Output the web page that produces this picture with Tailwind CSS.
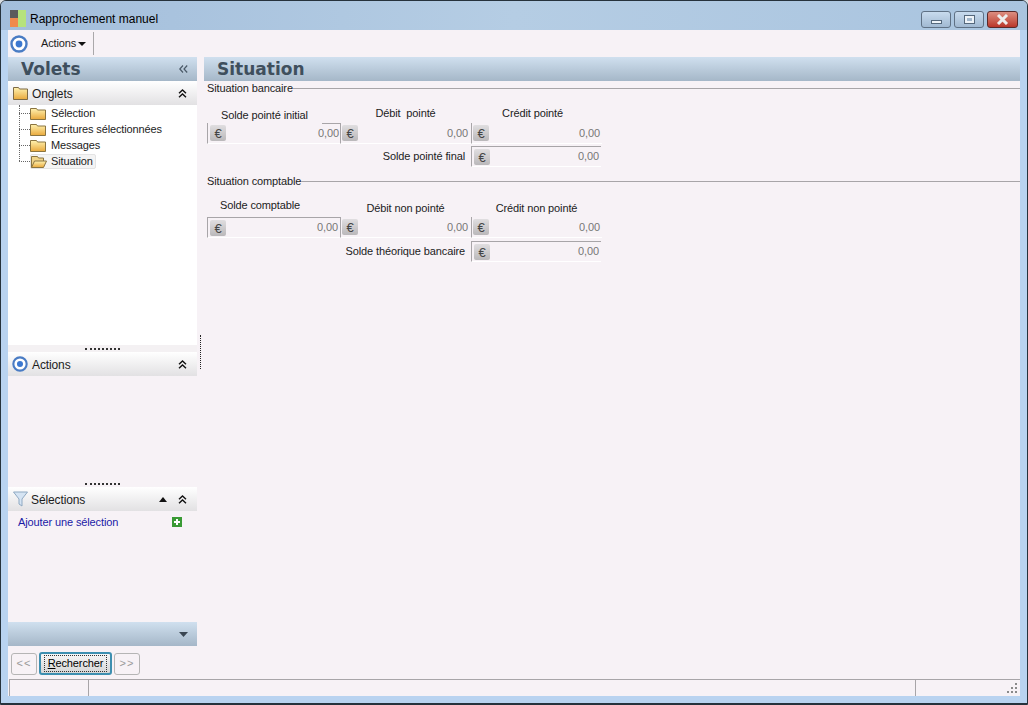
<!DOCTYPE html>
<html lang="fr">
<head>
  <meta charset="UTF-8">
  <title>Rapprochement manuel</title>
  <script src="https://cdn.jsdelivr.net/npm/@tailwindcss/browser@4"></script>
</head>
<body class="w-[1028px] h-[705px] overflow-hidden bg-[#d8dde2] font-['Liberation_Sans',sans-serif] text-[11px] tracking-[-0.12px] text-[#1c1c1c]">
  <svg class="absolute w-0 h-0">
    <defs>
      <linearGradient id="folder" x1="0" y1="0" x2="0" y2="1"><stop offset="0" stop-color="#fff2b0"/><stop offset="1" stop-color="#e9a93c"/></linearGradient>
      <linearGradient id="euro" x1="0" y1="0" x2="0" y2="1"><stop offset="0" stop-color="#e0dee0"/><stop offset="1" stop-color="#bab8ba"/></linearGradient>
    </defs>
  </svg>
  <div class="relative flex flex-col w-[1028px] h-[705px] rounded-t-[6px] border border-[#26323c] bg-[#b9d3f0]">
    <!-- Title bar -->
    <div class="flex items-center h-[29px] shrink-0 pl-[9px] pr-[9px] rounded-t-[5px] bg-gradient-to-r from-[#a3bedb] via-[#b5cde4] to-[#a9c4df]">
      <div class="grid grid-cols-2 grid-rows-2 w-[16px] h-[17px] mt-[5px]">
        <div class="bg-[#5c5c5c]"></div>
        <div class="row-span-2 bg-[#b6e27c]"></div>
        <div class="bg-[#f08a4c]"></div>
      </div>
      <span class="ml-[4px] mt-[6px] text-[12px] text-black tracking-normal">Rapprochement manuel</span>
      <div class="ml-auto flex gap-[3px] mt-[8px]">
        <div class="flex items-center justify-center w-[30px] h-[17px] rounded-[3px] border border-[#5f7185] bg-gradient-to-b from-[#c8dbee] to-[#a1b9d2]">
          <div class="w-[11px] h-[4px] mt-[4px] bg-[#eef3f8] border border-[#55687c]"></div>
        </div>
        <div class="flex items-center justify-center w-[30px] h-[17px] rounded-[3px] border border-[#5f7185] bg-gradient-to-b from-[#c8dbee] to-[#a1b9d2]">
          <div class="w-[9px] h-[7px] bg-[#55687c]/20 border-2 border-[#eef3f8] outline outline-1 outline-[#55687c]"></div>
        </div>
        <div class="flex items-center justify-center w-[31px] h-[17px] rounded-[3px] border border-[#5a2a2a] bg-gradient-to-b from-[#dc8d80] to-[#b9352a]">
          <svg width="13" height="11" viewBox="0 0 13 11"><path d="M2 1l9 9M11 1l-9 9" stroke="#eee" stroke-width="3"/></svg>
        </div>
      </div>
    </div>

    <!-- Window content -->
    <div class="flex flex-col mx-[7px] w-[1012px] h-[666px] bg-[#f7f2f6]">
      <!-- Toolbar -->
      <div class="flex items-center h-[27px] shrink-0 pl-[2px]">
        <svg width="18" height="18" viewBox="0 0 18 18"><circle cx="9" cy="9" r="7.5" fill="#fff" stroke="#4a7cc4" stroke-width="2.4"/><circle cx="9" cy="9" r="3.4" fill="#3c78d0"/></svg>
        <span class="ml-[13px]">Actions</span>
        <svg class="ml-[2px] mt-[1px]" width="8" height="4" viewBox="0 0 8 4"><path d="M0 0h8L4 4z" fill="#111"/></svg>
        <div class="ml-[7px] w-px h-[23px] bg-[#aaa8aa]"></div>
      </div>

      <div class="flex flex-1 min-h-0">
        <!-- Left panel -->
        <div class="flex flex-col w-[189px] shrink-0">
          <div class="flex items-center justify-between h-[24px] shrink-0 pl-[13px] pr-[9px] bg-gradient-to-b from-[#d0e0ef] to-[#a5b7c8]">
            <span class="mt-[2px] font-['DejaVu_Sans',sans-serif] font-bold text-[17px] tracking-normal text-[#3f4f5d]">Volets</span>
            <svg width="9" height="8" viewBox="0 0 9 8" fill="none" stroke="#4b5a68" stroke-width="1.2"><path d="M4 0.5L0.8 4 4 7.5M8.2 0.5L5 4l3.2 3.5"/></svg>
          </div>

          <div class="flex items-center h-[24px] shrink-0 pl-[5px] pr-[10px] bg-gradient-to-b from-white to-[#e2e1e3]">
            <svg width="15" height="14" viewBox="0 0 15 14"><path d="M0.5 1.5h5l1 1.5h8v10.5h-14z" fill="url(#folder)" stroke="#7d6a45"/></svg>
            <span class="ml-[4px] mt-[1px] text-[12px]">Onglets</span>
            <svg class="ml-auto" width="9" height="9" viewBox="0 0 9 9" fill="none" stroke="#111" stroke-width="1.4"><path d="M1 4.2L4.5 1 8 4.2M1 8.2L4.5 5 8 8.2"/></svg>
          </div>

          <!-- Tree -->
          <div class="relative h-[240px] shrink-0 bg-white pl-[11px]">
            <div class="absolute left-[11px] top-0 h-[56px] border-l border-dotted border-[#666]"></div>
            <div class="flex items-center h-[16px]">
              <div class="w-[11px] border-t border-dotted border-[#666]"></div>
              <svg width="16" height="13" viewBox="0 0 16 13"><path d="M0.5 1.5h6l1 1.5h8v9.5h-15z" fill="url(#folder)" stroke="#8a7440"/></svg>
              <span class="ml-[5px]">Sélection</span>
            </div>
            <div class="flex items-center h-[16px]">
              <div class="w-[11px] border-t border-dotted border-[#666]"></div>
              <svg width="16" height="13" viewBox="0 0 16 13"><path d="M0.5 1.5h6l1 1.5h8v9.5h-15z" fill="url(#folder)" stroke="#8a7440"/></svg>
              <span class="ml-[5px]">Ecritures sélectionnées</span>
            </div>
            <div class="flex items-center h-[16px]">
              <div class="w-[11px] border-t border-dotted border-[#666]"></div>
              <svg width="16" height="13" viewBox="0 0 16 13"><path d="M0.5 1.5h6l1 1.5h8v9.5h-15z" fill="url(#folder)" stroke="#8a7440"/></svg>
              <span class="ml-[5px]">Messages</span>
            </div>
            <div class="flex items-center h-[16px]">
              <div class="w-[11px] border-t border-dotted border-[#666]"></div>
              <div class="flex items-center h-[15px] pr-[2px] rounded-[2px] border border-[#e4e4e4] bg-[#f4f4f4]">
                <svg width="16" height="13" viewBox="0 0 16 13"><path d="M0.5 12.5v-11h6l1 1.5h5v3" fill="#f0d48a" stroke="#8a7440"/><path d="M0.5 12.5l3-6.5h12l-3 6.5z" fill="url(#folder)" stroke="#8a7440"/></svg>
                <span class="ml-[4px]">Situation</span>
              </div>
            </div>
          </div>

          <div class="flex items-center justify-center h-[7px] shrink-0 bg-[#f4f1f3]">
            <div class="w-[35px] border-t-2 border-dotted border-[#333]"></div>
          </div>

          <div class="flex items-center h-[24px] shrink-0 pl-[4px] pr-[10px] bg-gradient-to-b from-white to-[#e2e1e3]">
            <svg width="16" height="16" viewBox="0 0 18 18"><circle cx="9" cy="9" r="7.5" fill="#fff" stroke="#4a7cc4" stroke-width="2.4"/><circle cx="9" cy="9" r="3.4" fill="#3c78d0"/></svg>
            <span class="ml-[4px] mt-[1px] text-[12px]">Actions</span>
            <svg class="ml-auto" width="9" height="9" viewBox="0 0 9 9" fill="none" stroke="#111" stroke-width="1.4"><path d="M1 4.2L4.5 1 8 4.2M1 8.2L4.5 5 8 8.2"/></svg>
          </div>

          <div class="h-[104px] shrink-0"></div>

          <div class="flex items-center justify-center h-[7px] shrink-0">
            <div class="w-[35px] border-t-2 border-dotted border-[#333]"></div>
          </div>

          <div class="flex items-center h-[24px] shrink-0 pl-[5px] pr-[10px] bg-gradient-to-b from-white to-[#e2e1e3]">
            <svg width="15" height="16" viewBox="0 0 15 16"><path d="M0.5 1h14L9 8v7L6 13V8z" fill="#d5e4f3" stroke="#8fa9c2"/></svg>
            <span class="ml-[3px] mt-[1px] text-[12px]">Sélections</span>
            <svg class="ml-auto" width="8" height="5" viewBox="0 0 8 5"><path d="M0 5h8L4 0z" fill="#111"/></svg>
            <svg class="ml-[11px]" width="9" height="9" viewBox="0 0 9 9" fill="none" stroke="#111" stroke-width="1.4"><path d="M1 4.2L4.5 1 8 4.2M1 8.2L4.5 5 8 8.2"/></svg>
          </div>

          <div class="flex items-center justify-between h-[22px] shrink-0 pl-[10px] pr-[15px]">
            <span class="text-[#1a1aa6]">Ajouter une sélection</span>
            <svg width="10" height="10" viewBox="0 0 10 10"><rect width="10" height="10" fill="#3a9a35"/><path d="M5 2v6M2 5h6" stroke="#fff" stroke-width="2"/></svg>
          </div>

          <div class="h-[89px] shrink-0"></div>

          <div class="flex items-center justify-end h-[24px] shrink-0 pr-[9px] bg-gradient-to-b from-[#d0e0ef] to-[#a5b7c8]">
            <svg width="9" height="5" viewBox="0 0 9 5"><path d="M0 0h9L4.5 5z" fill="#3a4652"/></svg>
          </div>

          <div class="flex items-center gap-[2px] pl-[3px] pt-[6px]">
            <div class="flex items-center justify-center w-[26px] h-[22px] rounded-[3px] border border-[#b5b5b5] text-[#9a9a9a] tracking-[1px]">&lt;&lt;</div>
            <div class="flex items-center justify-center w-[73px] h-[23px] rounded-[3px] border-2 border-[#3d8fb0] bg-gradient-to-b from-[#f6f6f6] to-[#d6d6d6]">
              <span class="px-[3px] border border-dotted border-[#333] leading-[15px] text-black"><u>R</u>echercher</span>
            </div>
            <div class="flex items-center justify-center w-[26px] h-[22px] rounded-[3px] border border-[#b5b5b5] text-[#9a9a9a] tracking-[1px]">&gt;&gt;</div>
          </div>
        </div>

        <!-- Splitter -->
        <div class="relative w-[7px] shrink-0">
          <div class="absolute left-[3px] top-[278px] h-[34px] border-l border-dotted border-[#222]"></div>
        </div>

        <!-- Main panel -->
        <div class="flex flex-col flex-1 min-w-0">
          <div class="flex items-center h-[24px] shrink-0 pl-[13px] bg-gradient-to-b from-[#d0e0ef] to-[#a5b7c8]">
            <span class="mt-[2px] font-['DejaVu_Sans',sans-serif] font-bold text-[17px] tracking-normal text-[#3f4f5d]">Situation</span>
          </div>

          <div class="pl-[3px]">
            <!-- Situation bancaire -->
            <div class="flex items-center h-[14px]">
              <span>Situation bancaire</span>
              <div class="flex-1 h-px bg-[#a8a5a8]"></div>
            </div>

            <div class="grid grid-cols-[133px_131px_131px] h-[17px] mt-[10px] text-center">
              <span class="pt-[2px] pr-[18px]">Solde pointé initial</span>
              <span>Débit&nbsp; pointé</span>
              <span class="pr-[8px]">Crédit pointé</span>
            </div>

            <div class="grid grid-cols-[133px_131px_131px] h-[23px] mt-[1px]">
              <div class="relative flex items-center justify-between h-[21px] pl-[2px] pr-[1px] border-l border-[#a8a5a8] border-b border-b-white">
                <svg width="16" height="16" viewBox="0 0 16 16"><rect width="16" height="16" rx="2" fill="url(#euro)"/><text x="8" y="12.5" text-anchor="middle" font-size="13" fill="#444">€</text></svg>
                <span class="text-[#777]">0,00</span>
                <div class="absolute right-0 top-0 w-[18px] h-px bg-[#a8a5a8]"></div>
              </div>
              <div class="flex items-center justify-between h-[21px] pl-[1px] pr-[3px] border-l border-[#a8a5a8] border-b border-b-white">
                <svg width="16" height="16" viewBox="0 0 16 16"><rect width="16" height="16" rx="2" fill="url(#euro)"/><text x="8" y="12.5" text-anchor="middle" font-size="13" fill="#444">€</text></svg>
                <span class="text-[#777]">0,00</span>
              </div>
              <div class="flex items-center justify-between h-[21px] pl-[1px] pr-[2px] border-l border-[#a8a5a8] border-b border-b-white">
                <svg width="16" height="16" viewBox="0 0 16 16"><rect width="16" height="16" rx="2" fill="url(#euro)"/><text x="8" y="12.5" text-anchor="middle" font-size="13" fill="#444">€</text></svg>
                <span class="text-[#777]">0,00</span>
              </div>
            </div>

            <div class="flex items-center h-[21px]">
              <span class="w-[258px] text-right">Solde pointé final</span>
              <div class="flex items-center justify-between w-[130px] h-[21px] ml-[6px] pl-[2px] pr-[2px] border-l border-t border-[#a8a5a8] border-b border-b-white">
                <svg width="16" height="16" viewBox="0 0 16 16"><rect width="16" height="16" rx="2" fill="url(#euro)"/><text x="8" y="12.5" text-anchor="middle" font-size="13" fill="#444">€</text></svg>
                <span class="text-[#777]">0,00</span>
              </div>
            </div>

            <!-- Situation comptable -->
            <div class="flex items-center h-[14px] mt-[7px]">
              <span>Situation comptable</span>
              <div class="flex-1 h-px bg-[#a8a5a8]"></div>
            </div>

            <div class="grid grid-cols-[133px_131px_131px] h-[20px] mt-[9px] text-center">
              <span class="pr-[27px]">Solde comptable</span>
              <span class="pt-[3px]">Débit non pointé</span>
              <span class="pt-[3px]">Crédit non pointé</span>
            </div>

            <div class="grid grid-cols-[133px_131px_131px] h-[24px]">
              <div class="flex items-center justify-between h-[21px] pl-[2px] pr-[2px] border-l border-t border-[#a8a5a8] border-b border-b-white">
                <svg width="16" height="16" viewBox="0 0 16 16"><rect width="16" height="16" rx="2" fill="url(#euro)"/><text x="8" y="12.5" text-anchor="middle" font-size="13" fill="#444">€</text></svg>
                <span class="text-[#777]">0,00</span>
              </div>
              <div class="flex items-center justify-between h-[21px] pl-[1px] pr-[3px] border-l border-[#a8a5a8] border-b border-b-white">
                <svg width="16" height="16" viewBox="0 0 16 16"><rect width="16" height="16" rx="2" fill="url(#euro)"/><text x="8" y="12.5" text-anchor="middle" font-size="13" fill="#444">€</text></svg>
                <span class="text-[#777]">0,00</span>
              </div>
              <div class="flex items-center justify-between h-[21px] pl-[1px] pr-[2px] border-l border-[#a8a5a8] border-b border-b-white">
                <svg width="16" height="16" viewBox="0 0 16 16"><rect width="16" height="16" rx="2" fill="url(#euro)"/><text x="8" y="12.5" text-anchor="middle" font-size="13" fill="#444">€</text></svg>
                <span class="text-[#777]">0,00</span>
              </div>
            </div>

            <div class="flex items-center h-[21px]">
              <span class="w-[258px] text-right">Solde théorique bancaire</span>
              <div class="flex items-center justify-between w-[130px] h-[21px] ml-[6px] pl-[2px] pr-[2px] border-l border-t border-[#a8a5a8] border-b border-b-white">
                <svg width="16" height="16" viewBox="0 0 16 16"><rect width="16" height="16" rx="2" fill="url(#euro)"/><text x="8" y="12.5" text-anchor="middle" font-size="13" fill="#444">€</text></svg>
                <span class="text-[#777]">0,00</span>
              </div>
            </div>
          </div>
        </div>
      </div>

      <!-- Status bar -->
      <div class="flex h-[17px] shrink-0 ml-[1px] mt-[5px] border-t border-[#a8a5a8]">
        <div class="w-[80px] border-l border-r border-[#a8a5a8]"></div>
        <div class="w-[827px] border-r border-[#a8a5a8]"></div>
        <div class="relative flex-1">
          <svg class="absolute right-[2px] bottom-[2px]" width="11" height="11" viewBox="0 0 11 11" fill="#8a8a8a"><path d="M8 0h2v2H8zM4 4h2v2H4zM8 4h2v2H8zM0 8h2v2H0zM4 8h2v2H4zM8 8h2v2H8z"/></svg>
        </div>
      </div>
    </div>
    <div class="absolute left-0 right-0 bottom-0 h-px bg-[#26323c]"></div>
  </div>
</body>
</html>
